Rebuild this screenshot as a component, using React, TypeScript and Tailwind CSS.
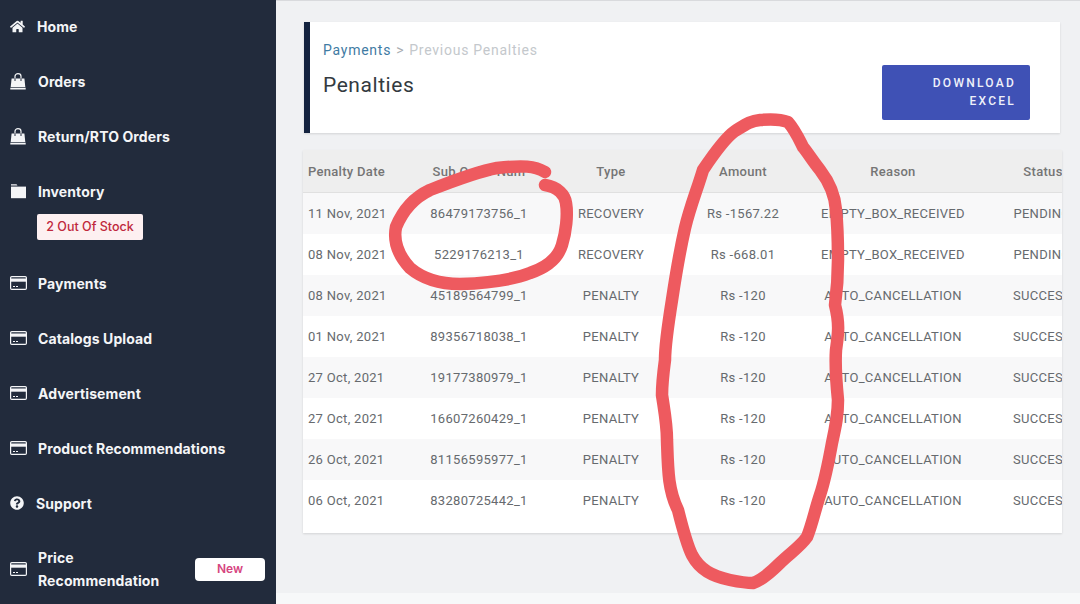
import { FaHome, FaQuestionCircle } from "react-icons/fa";

function Bag() {
  return (
    <svg width="16" height="17" viewBox="0 0 16 17" fill="none" className="shrink-0">
      <path d="M1.6 5.5h12.8l.9 8.5H.7z" fill="#f4f5f7" />
      <rect x="0.3" y="14.7" width="15.4" height="1.8" fill="#f4f5f7" />
      <path d="M5 8V3.2a3 2.6 0 0 1 6 0V8" stroke="#222b3c" strokeWidth="1" />
      <path d="M5 5.5V3.2a3 2.6 0 0 1 6 0v2.3" stroke="#f4f5f7" strokeWidth="1.2" />
    </svg>
  );
}

function Folder() {
  return (
    <svg width="16" height="16" viewBox="0 0 16 16" className="shrink-0">
      <path d="M1 1.2h5.5l1 1.4H1z" fill="#f4f5f7" />
      <rect x="1" y="3.6" width="15" height="11.6" fill="#f4f5f7" />
    </svg>
  );
}

function Card() {
  return (
    <svg width="17" height="14" viewBox="0 0 17 14" className="shrink-0">
      <rect x="0.6" y="0.6" width="15.8" height="12.8" rx="1.2" fill="none" stroke="#f4f5f7" strokeWidth="1.2" />
      <rect x="1" y="2.5" width="15" height="3.2" fill="#f4f5f7" />
      <rect x="3" y="10" width="2" height="1" fill="#f4f5f7" />
      <rect x="6" y="10" width="2" height="1" fill="#f4f5f7" />
    </svg>
  );
}

function Item({ icon, label, gap }: { icon: React.ReactNode; label: string; gap: string }) {
  return (
    <div className={`flex h-6 items-center ${gap}`}>
      {icon}
      <span className="whitespace-nowrap">{label}</span>
    </div>
  );
}

const rows = [
  ["11 Nov, 2021", "86479173756_1", "RECOVERY", "Rs -1567.22", "EMPTY_BOX_RECEIVED", "PENDING"],
  ["08 Nov, 2021", "5229176213_1", "RECOVERY", "Rs -668.01", "EMPTY_BOX_RECEIVED", "PENDING"],
  ["08 Nov, 2021", "45189564799_1", "PENALTY", "Rs -120", "AUTO_CANCELLATION", "SUCCESS"],
  ["01 Nov, 2021", "89356718038_1", "PENALTY", "Rs -120", "AUTO_CANCELLATION", "SUCCESS"],
  ["27 Oct, 2021", "19177380979_1", "PENALTY", "Rs -120", "AUTO_CANCELLATION", "SUCCESS"],
  ["27 Oct, 2021", "16607260429_1", "PENALTY", "Rs -120", "AUTO_CANCELLATION", "SUCCESS"],
  ["26 Oct, 2021", "81156595977_1", "PENALTY", "Rs -120", "AUTO_CANCELLATION", "SUCCESS"],
  ["06 Oct, 2021", "83280725442_1", "PENALTY", "Rs -120", "AUTO_CANCELLATION", "SUCCESS"],
];

const gridCols = "grid grid-cols-[110px_132px_132px_132px_168px_136px] items-center";

export default function App() {
  return (
    <div className="relative flex h-[604px] w-[1080px] overflow-hidden bg-[#f0f1f3] font-['Roboto',sans-serif]">
      <aside className="flex w-[276px] shrink-0 flex-col gap-[31px] bg-[#222b3c] pl-[10px] pt-[14px] font-['Inter',sans-serif] text-[14px] font-bold tracking-[0.1px] text-[#f4f5f7]">
        <Item icon={<FaHome className="h-[15px] w-[15px] shrink-0" />} label="Home" gap="gap-[12px]" />
        <Item icon={<Bag />} label="Orders" gap="gap-[12px]" />
        <Item icon={<Bag />} label="Return/RTO Orders" gap="gap-[12px]" />
        <div>
          <Item icon={<Folder />} label="Inventory" gap="gap-[12px]" />
          <div className="ml-[27px] mt-[11px] flex h-[26px] w-[106px] items-center justify-center rounded-[2px] bg-[#fdf0f1] text-[12.5px] font-medium tracking-normal text-[#c0283c]">
            2 Out Of Stock
          </div>
        </div>
        <Item icon={<Card />} label="Payments" gap="gap-[11px]" />
        <Item icon={<Card />} label="Catalogs Upload" gap="gap-[11px]" />
        <Item icon={<Card />} label="Advertisement" gap="gap-[11px]" />
        <Item icon={<Card />} label="Product Recommendations" gap="gap-[11px]" />
        <Item icon={<FaQuestionCircle className="h-[14px] w-[14px] shrink-0" />} label="Support" gap="gap-[12px]" />
        <div className="flex h-[46px] items-center pr-[11px]">
          <Card />
          <div className="ml-[11px] flex-1 leading-[23px]">
            Price
            <br />
            Recommendation
          </div>
          <div className="flex h-[23px] w-[70px] items-center justify-center rounded-[4px] bg-white text-[12px] font-semibold tracking-normal text-[#d6457f]">
            New
          </div>
        </div>
      </aside>

      <main className="flex min-w-0 flex-1 flex-col border-t border-[#d9dadd]">
        <div className="h-[592px] pl-[27px] pt-[21px]">
          <section className="ml-px flex h-[111px] w-[756px] justify-between border-l-[6px] border-[#14233f] bg-white pl-[13px] pr-[30px] shadow-[0_1px_2px_rgba(0,0,0,0.12)]">
            <div className="pt-[18px]">
              <div className="text-[14px] leading-5 tracking-[0.75px] text-[#c4c8cc]">
                <span className="text-[#3f7ba3]">Payments</span>
                <span className="mx-[5px] text-[#a9adb1]">&gt;</span>
                Previous Penalties
              </div>
              <h1 className="mt-[11px] text-[21px] font-normal leading-7 tracking-[0.55px] text-[#333a40]">
                Penalties
              </h1>
            </div>
            <button className="mt-[43px] flex h-[55px] w-[148px] flex-col items-end justify-center rounded-[2px] bg-[#3f51b5] pb-[2px] pr-[14px] text-[12px] font-medium leading-[18px] tracking-[2.25px] text-[#eef0fa]">
              <span>DOWNLOAD</span>
              <span>EXCEL</span>
            </button>
          </section>

          <section className="mt-[17px] h-[383px] w-[759px] overflow-hidden bg-white text-[13px] tracking-[0.3px] text-[#666a6e] shadow-[0_1px_2px_rgba(0,0,0,0.12)]">
            <div className={`${gridCols} h-[43px] w-[810px] border-b border-[#e0e0e0] bg-[#eeeeee] pt-[1px] text-center font-medium text-[#757575]`}>
              <div className="pl-[5px] text-left">Penalty Date</div>
              <div>Sub Order Num</div>
              <div>Type</div>
              <div>Amount</div>
              <div>Reason</div>
              <div className="pr-[4px]">Status</div>
            </div>
            {rows.map((r, i) => (
              <div key={i} className={`${gridCols} h-[41px] w-[810px] text-center ${i % 2 === 0 ? "bg-[#f8f8f9]" : "bg-white"}`}>
                <div className="pl-[5px] text-left">{r[0]}</div>
                <div>{r[1]}</div>
                <div>{r[2]}</div>
                <div>{r[3]}</div>
                <div>{r[4]}</div>
                <div className="pr-[6px]">{r[5]}</div>
              </div>
            ))}
          </section>
        </div>
        <div className="flex-1 bg-[#f7f8f9]" />
      </main>

      <svg className="pointer-events-none absolute left-0 top-0" width="1080" height="604" viewBox="0 0 1080 604" fill="none">
        <path
          d="M545 172 C535 166 523 165 497 168 C480 171 463 177 430 190 C413 198 403 210 396 227 C393 242 398 255 410 268 C423 279 440 284 460 284 C490 283 515 279 530 273 C548 267 558 258 562 245 C566 232 568 215 566 203 C565 195 558 187 545 185"
          stroke="#ee5a5f"
          strokeWidth="12.5"
          strokeLinecap="round"
          strokeLinejoin="round"
        />
        <path
          d="M788 122 C780 119 770 119 760 120 C750 121 745 125 735 131 C725 138 715 152 703 170 C697 190 690 207 685 228 C680 250 675 280 672 300 C668 325 665 345 665 360 C663 375 662 385 662 395 C665 415 667 425 667 440 C668 470 668 490 678 510 C683 530 687 545 692 555 C700 570 712 576 730 580 C740 582 748 583 753 583 C762 580 770 573 780 563 C790 553 800 547 807 537 C812 525 815 510 820 495 C825 480 828 465 832 443 C836 425 838 415 838 400 C836 380 835 365 836 350 C838 335 840 325 835 305 C837 290 838 275 838 260 C838 245 838 230 836 210 C835 195 830 183 820 170 C812 160 808 153 803 147 C798 137 795 130 788 122 Z"
          stroke="#ee5a5f"
          strokeWidth="12.5"
          strokeLinejoin="round"
        />
      </svg>
    </div>
  );
}
